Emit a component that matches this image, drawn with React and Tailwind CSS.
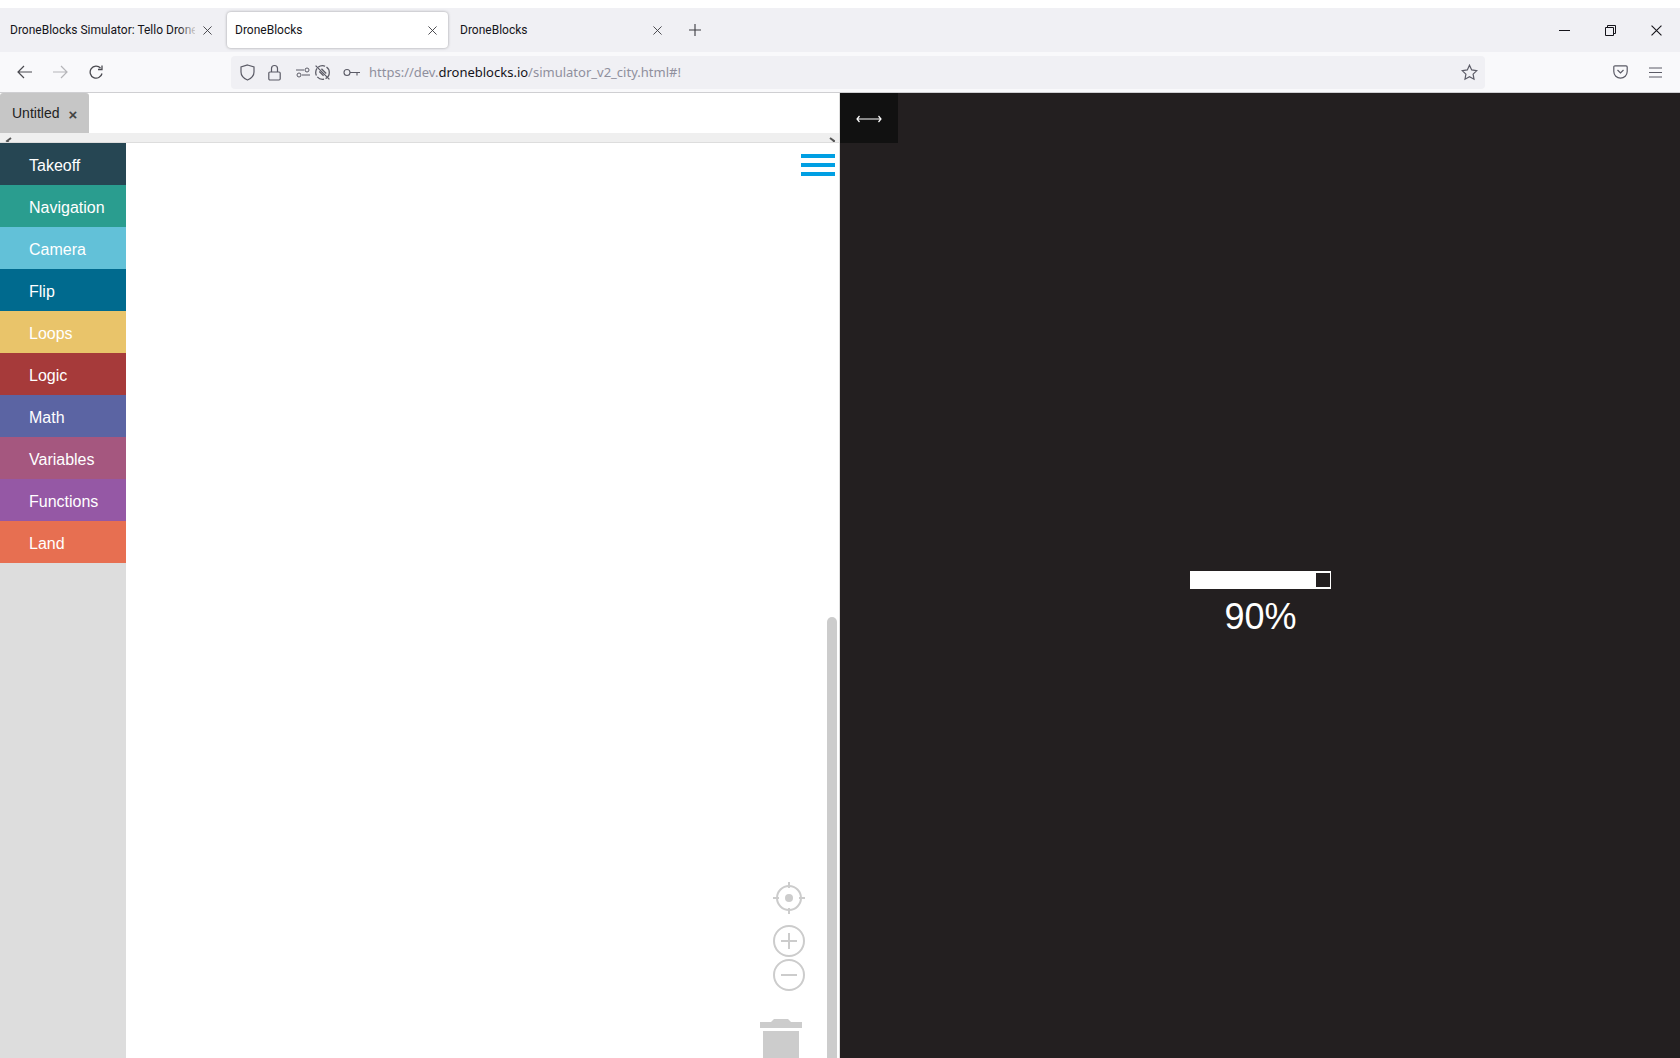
const blocks = [
  ["Takeoff", "bg-[#264653]"],
  ["Navigation", "bg-[#2a9d8f]"],
  ["Camera", "bg-[#62c1d8]"],
  ["Flip", "bg-[#006a8e]"],
  ["Loops", "bg-[#e9c46a]"],
  ["Logic", "bg-[#a63a3a]"],
  ["Math", "bg-[#5b64a3]"],
  ["Variables", "bg-[#a5577f]"],
  ["Functions", "bg-[#9558a5]"],
  ["Land", "bg-[#e76f51]"],
];

const X = ({ size = 10, color = "#15141a", width = 1 }) => (
  <svg width={size} height={size} viewBox="0 0 10 10" fill="none" stroke={color} strokeWidth={width}>
    <path d="M0.5 0.5 9.5 9.5M9.5 0.5 0.5 9.5" />
  </svg>
);

function Tab({ title, active, fade, w, closeClass }) {
  return (
    <div
      className={
        "relative flex h-9 items-center rounded-[4px] " +
        w +
        (active ? " bg-white shadow-[0_0_3px_rgba(0,0,0,0.35)]" : "")
      }
    >
      <span className="min-w-0 flex-1 overflow-hidden whitespace-nowrap pl-2 font-['Roboto',sans-serif] text-[12px] leading-4 text-[#15141a]">
        {title}
      </span>
      {fade && <div className="absolute right-[27px] top-0 h-full w-5 bg-gradient-to-r from-transparent to-[#f0f0f4]" />}
      <div className={"ml-2 shrink-0 " + closeClass}>
        <X size={9} color="#3a3a40" />
      </div>
    </div>
  );
}

export default function App() {
  return (
    <div className="flex h-[1058px] w-[1680px] flex-col overflow-hidden bg-white font-['Noto_Sans',sans-serif]">
      <div className="h-2 shrink-0 bg-white" />

      {/* tab strip */}
      <div className="flex h-11 shrink-0 items-center bg-[#f0f0f4]">
        <div className="flex items-center pl-[2px]">
          <Tab title="DroneBlocks Simulator: Tello Drone (Mavic)" fade w="w-[223px]" closeClass="mr-[13px]" />
        </div>
        <div className="ml-[2px] flex items-center">
          <Tab title="DroneBlocks" active w="w-[221px]" closeClass="mr-[11px]" />
        </div>
        <div className="ml-[2px] flex items-center pl-[2px]">
          <Tab title="DroneBlocks" w="w-[221px]" closeClass="mr-[11px]" />
        </div>
        <svg className="ml-[16px]" width="12" height="12" viewBox="0 0 12 12" stroke="#3a3a40" strokeWidth="1.1">
          <path d="M6 0v12M0 6h12" />
        </svg>
        <div className="ml-auto flex items-center">
          <svg className="mr-[35px]" width="11" height="11" viewBox="0 0 11 11" stroke="#15141a">
            <path d="M0 5.5h11" />
          </svg>
          <svg className="mr-[35px]" width="11" height="11" viewBox="0 0 11 11" fill="none" stroke="#15141a">
            <path d="M.5 2.5h8v8h-8zM2.5 2.5v-2h8v8h-2" />
          </svg>
          <div className="mr-[18px]">
            <X size={11} color="#15141a" />
          </div>
        </div>
      </div>

      {/* toolbar */}
      <div className="flex h-[41px] shrink-0 items-center border-b border-[#cfcfd2] bg-[#f9f9fb]">
        <svg className="ml-[17px]" width="15" height="14" viewBox="0 0 15 14" fill="none" stroke="#4a4a50" strokeWidth="1.2">
          <path d="M15 7H1M7 1 1 7l6 6" />
        </svg>
        <svg className="ml-[21px]" width="15" height="14" viewBox="0 0 15 14" fill="none" stroke="#b5b5b9" strokeWidth="1.2">
          <path d="M0 7h14M8 1l6 6-6 6" />
        </svg>
        <svg className="ml-[21px]" width="15" height="15" viewBox="0 0 15 15" fill="none" stroke="#4a4a50" strokeWidth="1.3">
          <path d="M13 8.5A6 6 0 1 1 11.5 3M13 .5V4.5H9" />
        </svg>

        <div className="ml-[127px] flex h-[33px] w-[1254px] items-center rounded-[4px] bg-[#f0f0f4]">
          <svg className="ml-[9px]" width="15" height="17" viewBox="0 0 15 17" fill="none" stroke="#5b5b66" strokeWidth="1.2">
            <path d="M7.5 1 14 3v5c0 4-3 6.5-6.5 8C4 14.500 1 12 1 8V3z" />
          </svg>
          <svg className="ml-[13px]" width="13" height="17" viewBox="0 0 13 17" fill="none" stroke="#5b5b66" strokeWidth="1.2">
            <path d="M3.500 8V4.500a3 3 0 0 1 6 0V8M2 8h9a1.200 1.200 0 0 1 1.200 1.200v5.600A1.200 1.200 0 0 1 11 16H2a1.200 1.200 0 0 1-1.200-1.200V9.200A1.200 1.200 0 0 1 2 8z" />
          </svg>
          <svg className="ml-[15px]" width="15" height="11" viewBox="0 0 15 11" fill="none" stroke="#5b5b66">
            <path d="M0 3h8M14 8H6" />
            <circle cx="11" cy="3" r="2" />
            <circle cx="3" cy="8" r="2" />
          </svg>
          <svg className="ml-[3px]" width="17" height="17" viewBox="0 0 16 16" fill="none" stroke="#5b5b66" strokeWidth="1.2">
            <circle cx="8" cy="8" r="6.400" strokeDasharray="7 1.500" />
            <path d="M1.500 1.500 14.500 14.500M5 7l4 4M7 4.500l4.500 4.500" />
          </svg>
          <svg className="ml-[12px]" width="17" height="9" viewBox="0 0 17 9" fill="none" stroke="#5b5b66" strokeWidth="1.100">
            <circle cx="4" cy="4.500" r="3" />
            <path d="M7 4.500h10M14 4.500v3" />
          </svg>
          <div className="ml-[9px] whitespace-nowrap text-[13px] leading-5 text-[#8f8f9d]">
            https://dev.<span className="text-[#15141a]">droneblocks.io</span>/simulator_v2_city.html#!
          </div>
          <svg className="mr-[7px] ml-auto" width="17" height="17" viewBox="0 0 17 17" fill="none" stroke="#5b5b66" strokeWidth="1.200">
            <path d="m8.500 1.200 2.200 4.700 5.100.7-3.700 3.500.9 5.100-4.500-2.500-4.500 2.500.9-5.100L1.200 6.600l5.100-.7z" />
          </svg>
        </div>

        <svg className="ml-[128px]" width="15" height="14" viewBox="0 0 15 14" fill="none" stroke="#5b5b66" strokeWidth="1.200">
          <path d="M2 .8h11a1.200 1.200 0 0 1 1.200 1.200v4.500a6.700 6.700 0 0 1-13.400 0V2A1.200 1.200 0 0 1 2 .8zM4.500 5l3 3 3-3" />
        </svg>
        <svg className="ml-[21px]" width="13" height="11" viewBox="0 0 13 11" stroke="#5b5b66">
          <path d="M0 1h13M0 5.500h13M0 10h13" />
        </svg>
      </div>

      {/* page */}
      <div className="flex min-h-0 flex-1">
        <div className="flex w-[840px] shrink-0 flex-col border-r border-[#ddd]">
          <div className="flex h-10 shrink-0 items-end">
            <div className="flex h-10 w-[89px] items-center rounded-t-[3px] bg-[#c6c6c6] pl-3 font-['Liberation_Sans',sans-serif] text-[14px] text-[#222]">
              Untitled
              <span className="ml-[9px] mt-[2px] text-[15px] font-bold leading-none text-[#444]">×</span>
            </div>
          </div>

          <div className="flex h-[10px] shrink-0 items-start justify-between overflow-hidden border-b border-[#ddd] bg-[#efefef] pl-[5px] pr-[3px]">
            <svg className="mt-[4px]" width="7" height="8" viewBox="0 0 7 8" fill="none" stroke="#555" strokeWidth="2">
              <path d="M6 1 2 4l4 4" />
            </svg>
            <svg className="mt-[4px]" width="7" height="8" viewBox="0 0 7 8" fill="none" stroke="#555" strokeWidth="2">
              <path d="M1 1l4 3-1 4" />
            </svg>
          </div>

          <div className="relative flex min-h-0 flex-1">
            <div className="w-[126px] shrink-0 bg-[#ddd]">
              {blocks.map(([name, bg]) => (
                <div
                  key={name}
                  className={
                    "flex h-[42px] items-center pl-[29px] pt-[4px] font-['Liberation_Sans',sans-serif] text-[16px] text-white " + bg
                  }
                >
                  {name}
                </div>
              ))}
            </div>
            <div className="flex-1 bg-white" />

            {/* hamburger */}
            <div className="absolute left-[801px] top-[11px] flex w-[34px] flex-col gap-[5px]">
              <div className="h-1 bg-[#009fe3]" />
              <div className="h-1 bg-[#009fe3]" />
              <div className="h-1 bg-[#009fe3]" />
            </div>

            {/* workspace scrollbar */}
            <div className="absolute left-[827px] top-[474px] h-[441px] w-[10px] rounded-t-[5px] bg-[#ccc]" />

            {/* workspace controls */}
            <svg className="absolute left-[772px] top-[739px]" width="34" height="34" viewBox="0 0 34 34" fill="none" stroke="#ccc" strokeWidth="2">
              <circle cx="17" cy="16" r="12" />
              <circle cx="17" cy="16" r="4" fill="#ccc" stroke="none" />
              <path d="M17 0v6M17 26v6M1 16h6M27 16h6" />
            </svg>
            <svg className="absolute left-[772px] top-[781px]" width="34" height="34" viewBox="0 0 34 34" fill="none" stroke="#ccc" strokeWidth="2">
              <circle cx="17" cy="17" r="15" />
              <path d="M17 9v16M9 17h16" />
            </svg>
            <svg className="absolute left-[772px] top-[815px]" width="34" height="34" viewBox="0 0 34 34" fill="none" stroke="#ccc" strokeWidth="2">
              <circle cx="17" cy="17" r="15" />
              <path d="M9 17h16" />
            </svg>
            <svg className="absolute left-[760px] top-[874px]" width="42" height="41" viewBox="0 0 42 41" fill="#ccc">
              <path d="M11 5 14 2h14L31 5z" />
              <rect x="0" y="5" width="42" height="6" />
              <rect x="3" y="14" width="36" height="27" />
            </svg>
          </div>
        </div>

        {/* simulator */}
        <div className="flex min-w-0 flex-1 flex-col bg-[#231f20]">
          <div className="flex h-[50px] w-[58px] items-center justify-center bg-[#111] pt-[2px]">
            <svg width="26" height="8" viewBox="0 0 26 8" fill="none" stroke="#fff" strokeWidth="1.200">
              <path d="M1 4h24M3.500 1 1 4l2.500 3M22.500 1 25 4l-2.500 3" />
            </svg>
          </div>
          <div className="flex flex-1 flex-col items-center pt-[428px] pl-[1px]">
            <div className="flex h-[18px] w-[141px] justify-end bg-white p-[2px] pr-[1px]">
              <div className="w-[14px] bg-[#231f20]" />
            </div>
            <div className="mt-[7px] font-['Liberation_Sans',sans-serif] text-[36px] leading-[41px] text-white">90%</div>
          </div>
        </div>
      </div>
    </div>
  );
}
